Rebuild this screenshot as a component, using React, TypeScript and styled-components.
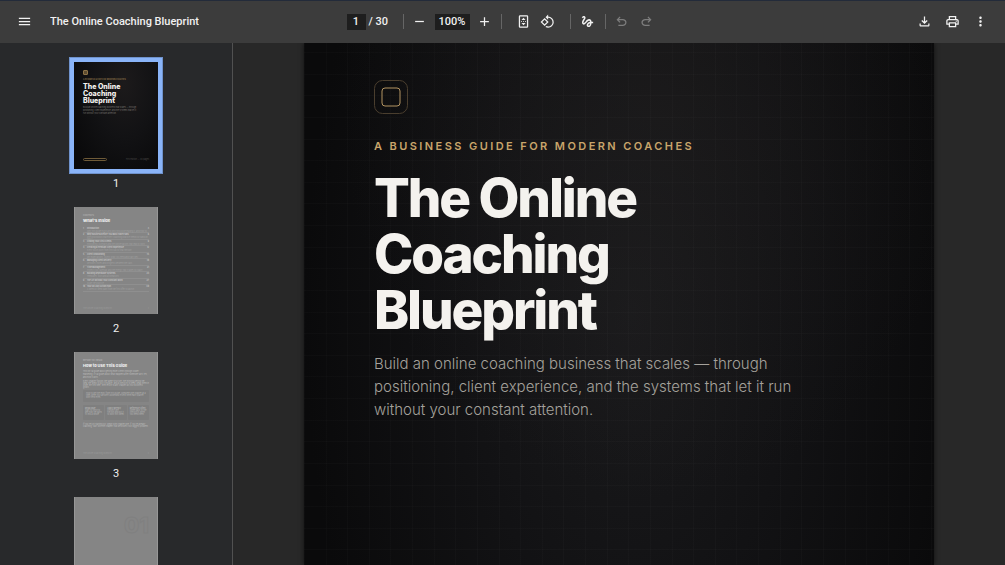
import React from "react";
import styled, { createGlobalStyle } from "styled-components";
import {
  MdAdd,
  MdGesture,
  MdMenu,
  MdMoreVert,
  MdOutlinePrint,
  MdRemove,
  MdRotate90DegreesCcw,
} from "react-icons/md";

const GlobalStyle = createGlobalStyle`
  *, *::before, *::after { box-sizing: border-box; }
  body { margin: 0; background: #282828; }
  button, input { font: inherit; color: inherit; border: 0; padding: 0; margin: 0; }
  h1, h2, p, ol { margin: 0; padding: 0; }
`;

const Shell = styled.div`
  display: grid;
  grid-template-rows: auto minmax(0, 1fr);
  height: 100vh;
  font-family: Roboto, "Liberation Sans", sans-serif;
  color: #f1f1f1;
`;

/* ---------- toolbar ---------- */

const Toolbar = styled.header`
  display: grid;
  grid-template-columns: minmax(0, 1fr) auto minmax(0, 1fr);
  align-items: center;
  height: 43px;
  padding-bottom: 1px;
  border-top: 1px solid #232b3a;
  background: #3c3c3c;
  font-size: 11px;
  font-weight: 500;
`;

const ToolGroup = styled.div<{ $gap?: number }>`
  display: flex;
  align-items: center;
  gap: ${(p) => p.$gap ?? 0}px;
`;

const StartGroup = styled(ToolGroup)`
  padding-left: 12px;
`;

const EndGroup = styled(ToolGroup)`
  justify-content: flex-end;
  padding-right: 13px;
`;

const DocTitle = styled.span`
  white-space: nowrap;
  overflow: hidden;
  text-overflow: ellipsis;
`;

const IconButton = styled.button`
  display: flex;
  align-items: center;
  justify-content: center;
  width: 24px;
  height: 24px;
  flex: none;
  border-radius: 50%;
  background: transparent;
  cursor: pointer;

  svg {
    width: 15px;
    height: 15px;
    fill: currentColor;
  }

  &:disabled {
    color: #7d7d7d;
    cursor: default;
  }
`;

const ToolInput = styled.input<{ $width: number }>`
  width: ${(p) => p.$width}px;
  height: 16px;
  background: #1e1e1e;
  text-align: center;
`;

const PageCount = styled.span`
  width: 23px;
  padding-left: 3px;
  white-space: nowrap;
`;

const Divider = styled.span<{ $before: number; $after: number }>`
  width: 1px;
  height: 15px;
  margin: 0 ${(p) => p.$after}px 0 ${(p) => p.$before}px;
  background: #666666;
`;

/* ---------- thumbnails ---------- */

const Body = styled.div`
  display: grid;
  grid-template-columns: 233px minmax(0, 1fr);
  min-height: 0;
`;

const Sidebar = styled.nav`
  display: flex;
  flex-direction: column;
  align-items: center;
  gap: 16px;
  padding-top: 19px;
  border-right: 1px solid #515151;
  background: #28292b;
  overflow: hidden;
`;

const ThumbItem = styled.div`
  display: flex;
  flex-direction: column;
  align-items: center;
  gap: 8px;
  flex: none;
  font-size: 11px;
  line-height: 14px;
`;

const Thumb = styled.button<{ $selected?: boolean }>`
  display: flex;
  flex-direction: column;
  width: 84px;
  height: 107px;
  padding: ${(p) => (p.$selected ? "8px 9px" : "5px 9px 4px")};
  font-family: Inter, "Liberation Sans", sans-serif;
  text-align: left;
  overflow: hidden;
  cursor: pointer;
  color: ${(p) => (p.$selected ? "#f4f2ee" : "#c4c4c4")};
  background: ${(p) =>
    p.$selected
      ? "radial-gradient(ellipse at 60% 20%, #1c1a1b 0%, #121214 45%, #0a0a0b 85%)"
      : "#858585"};
  box-shadow: ${(p) =>
    p.$selected ? "0 0 0 4px #8ab4f8, 0 0 0 5px #6f92cc" : "inset 1px 0 #979797, inset -1px 0 #979797"};
`;

const MiniLogo = styled.span`
  width: 5px;
  height: 5px;
  border: 1px solid #8d7347;
  border-radius: 1px;
  background: #5d4c30;
`;

const MiniEyebrow = styled.span`
  margin-top: 3px;
  font-size: 2px;
  line-height: 2px;
  font-weight: 600;
  color: #8f754a;
  white-space: nowrap;
`;

const MiniTitle = styled.span<{ $size: number }>`
  margin-top: ${(p) => (p.$size > 5 ? 3 : 1)}px;
  font-size: ${(p) => p.$size}px;
  line-height: ${(p) => (p.$size > 5 ? 7 : 5)}px;
  font-weight: 800;
  color: ${(p) => (p.$size > 5 ? "#f4f2ee" : "#eeeeee")};
  white-space: nowrap;
`;

const MiniText = styled.span<{ $dim?: boolean }>`
  display: block;
  max-width: ${(p) => (p.$dim ? "56px" : "none")};
  margin-top: 2px;
  font-size: 2px;
  line-height: 3px;
  color: ${(p) => (p.$dim ? "#77746f" : "#bcbcbc")};
`;

const MiniFinePrint = styled(MiniText)`
  margin-top: 1px;
  line-height: 2px;
`;

const MiniRows = styled.span`
  display: block;
  margin-top: 4px;
`;

const MiniRow = styled.span`
  display: grid;
  grid-template-columns: 4px 1fr auto;
  height: 7px;
  border-bottom: 1px solid #8f8f8f;
  font-size: 2px;
  line-height: 3px;
  font-weight: 700;

  &:nth-of-type(odd) {
    height: 6px;
  }
`;

const MiniSub = styled.span`
  display: block;
  font-weight: 400;
  color: #a0a0a0;
  line-height: 2px;
`;

const MiniPanel = styled.span`
  display: flex;
  flex-direction: column;
  height: 12px;
  margin-top: 2px;
  padding: 2px 3px;
  border-radius: 1px;
  background: #7f7f7f;
  font-size: 2px;
  line-height: 2px;
  color: #b4b4b4;
`;

const MiniCards = styled.span`
  display: grid;
  grid-template-columns: repeat(3, 1fr);
  gap: 1px;
  margin: 3px 0 2px;
`;

const MiniCard = styled(MiniPanel)`
  height: 15px;
  margin: 0;
  padding: 2px;
`;

const MiniFooter = styled.span`
  display: flex;
  align-items: center;
  justify-content: space-between;
  margin-top: auto;
  font-size: 2px;
  line-height: 3px;
  color: #999999;
`;

const MiniPill = styled.span`
  width: 24px;
  height: 3px;
  border: 1px solid #6f5b38;
  border-radius: 2px;
`;

const MiniNote = styled.span`
  color: #4a4948;
`;

const MiniNumber = styled.span`
  margin-top: 10px;
  font-size: 22px;
  line-height: 26px;
  font-weight: 800;
  text-align: right;
  color: transparent;
  -webkit-text-stroke: 1px #808080;
`;

/* ---------- document ---------- */

const Viewer = styled.main`
  display: flex;
  justify-content: center;
  background: #282828;
  overflow: hidden;
`;

const gridLine = "rgba(255, 255, 255, 0.014)";

const Page = styled.article`
  width: 630px;
  max-width: 100%;
  padding: 37px 70px;
  font-family: Inter, "Liberation Sans", sans-serif;
  background:
    repeating-linear-gradient(90deg, ${gridLine} 0 1px, transparent 1px 3.432%),
    repeating-linear-gradient(180deg, transparent 0 9px, ${gridLine} 9px 10px, transparent 10px 4.143%),
    radial-gradient(ellipse 50% 75% at 56% 12%, rgba(34, 32, 32, 0.45), transparent),
    radial-gradient(ellipse 52% 120% at 52% 52%, #1a1a1c 0%, #121214 50%, #0a0a0b 100%);
  box-shadow: 0 0 5px rgba(0, 0, 0, 0.6);
`;

const Logo = styled.svg`
  display: block;
  width: 34px;
  height: 34px;
`;

const Eyebrow = styled.p`
  margin-top: 24px;
  font-size: 11px;
  line-height: 16px;
  font-weight: 600;
  letter-spacing: 0.22em;
  text-transform: uppercase;
  color: #c9a56b;
`;

const Headline = styled.h1`
  max-width: 380px;
  margin-top: 16px;
  font-size: 53px;
  line-height: 56px;
  font-weight: 800;
  letter-spacing: -0.04em;
  color: #f4f2ee;
`;

const Lead = styled.p`
  max-width: 420px;
  margin-top: 14px;
  font-size: 15px;
  line-height: 23px;
  font-weight: 300;
  color: #a5a29c;
`;

const ms = "0 -960 960 960";

const FitIcon = () => (
  <svg viewBox="0 0 24 24" aria-hidden="true">
    <path
      fillRule="evenodd"
      d="M6.500 2h11a2 2 0 0 1 2 2v16a2 2 0 0 1-2 2h-11a2 2 0 0 1-2-2V4a2 2 0 0 1 2-2Zm0 2v16h11V4h-11Z"
    />
    <path d="m12 6 3.300 3.500H8.700zM12 18l3.300-3.500H8.700zM8 11.400h1.600v1.200H8zM11.200 11.400h1.600v1.200h-1.600zM14.400 11.400H16v1.200h-1.600z" />
  </svg>
);

const UndoIcon = () => (
  <svg viewBox={ms} aria-hidden="true">
    <path d="M280-200v-80h284q63 0 109.500-40T720-420q0-60-46.500-100T564-560H312l104 104-56 56-200-200 200-200 56 56-104 104h252q97 0 169.500 63T800-420q0 94-72.500 157T564-200H280Z" />
  </svg>
);

const RedoIcon = () => (
  <svg viewBox={ms} aria-hidden="true">
    <path d="M396-200q-97 0-169.500-63T154-420q0-94 72.500-157T396-640h252L544-744l56-56 200 200-200 200-56-56 104-104H396q-63 0-109.500 40T240-420q0 60 46.500 100T396-280h284v80H396Z" />
  </svg>
);

const DownloadIcon = () => (
  <svg viewBox={ms} aria-hidden="true">
    <path d="M480-320 280-520l56-58 104 104v-326h80v326l104-104 56 58-200 200ZM240-160q-33 0-56.500-23.500T160-240v-120h80v120h480v-120h80v120q0 33-23.500 56.500T720-160H240Z" />
  </svg>
);

const chapters = [
  ["Introduction", "Why this guide exists and who should be reading it, and how to begin"],
  ["Why Business Before You Must Have Plans", "The groundwork that every coaching practice needs to stand on first"],
  ["Finding Your First Clients", "Positioning, outreach and the conversations that lead to work"],
  ["Creating a Premium Client Experience", "Every touch point from first call to final session"],
  ["Client Onboarding", "Set expectations, collect what you need and start well"],
  ["Managing Client Delivery", "Sessions, notes and progress between the calls"],
  ["Time Management", "Protect your calendar and the energy that it takes to coach"],
  ["Building Repeatable Systems", "Templates, tools and automations"],
  ["The Art Without Your Constant Work", "Scale the practice"],
  ["Your 90-Day Action Plan", "A week by week path from the first offer to launch"],
];

const cards = [
  ["Read Once", "Start to finish to see how the parts fit into a whole"],
  ["Apply Weekly", "Choose one section and put it to work this week"],
  ["Reference Often", "Come back to the checklists when you need them"],
];

export default function App() {
  return (
    <>
      <GlobalStyle />
      <Shell>
        <Toolbar>
          <StartGroup $gap={14}>
            <IconButton aria-label="Menu"><MdMenu /></IconButton>
            <DocTitle>The Online Coaching Blueprint</DocTitle>
          </StartGroup>
          <ToolGroup>
            <ToolInput $width={19} aria-label="Page number" defaultValue="1" />
            <PageCount>/ 30</PageCount>
            <Divider $before={14} $after={4} />
            <ToolGroup $gap={3}>
              <IconButton aria-label="Zoom out"><MdRemove /></IconButton>
              <ToolInput $width={35} aria-label="Zoom level" defaultValue="100%" />
              <IconButton aria-label="Zoom in"><MdAdd /></IconButton>
            </ToolGroup>
            <Divider $before={4} $after={10} />
            <IconButton aria-label="Fit to page"><FitIcon /></IconButton>
            <IconButton aria-label="Rotate counterclockwise"><MdRotate90DegreesCcw /></IconButton>
            <Divider $before={10} $after={5} />
            <IconButton aria-label="Draw"><MdGesture /></IconButton>
            <Divider $before={5} $after={4} />
            <ToolGroup $gap={1}>
              <IconButton aria-label="Undo" disabled><UndoIcon /></IconButton>
              <IconButton aria-label="Redo" disabled><RedoIcon /></IconButton>
            </ToolGroup>
          </ToolGroup>
          <EndGroup $gap={4}>
            <IconButton aria-label="Download"><DownloadIcon /></IconButton>
            <IconButton aria-label="Print"><MdOutlinePrint /></IconButton>
            <IconButton aria-label="More actions"><MdMoreVert /></IconButton>
          </EndGroup>
        </Toolbar>

        <Body>
          <Sidebar aria-label="Thumbnails">
            <ThumbItem>
              <Thumb $selected aria-label="Page 1">
                <MiniLogo />
                <MiniEyebrow>A BUSINESS GUIDE FOR MODERN COACHES</MiniEyebrow>
                <MiniTitle $size={7}>The Online<br />Coaching<br />Blueprint</MiniTitle>
                <MiniText $dim>
                  Build an online coaching business that scales — through positioning, client
                  experience, and the systems that let it run without your constant attention.
                </MiniText>
                <MiniFooter><MiniPill /><MiniNote>First edition — 30 pages</MiniNote></MiniFooter>
              </Thumb>
              <span>1</span>
            </ThumbItem>

            <ThumbItem>
              <Thumb aria-label="Page 2">
                <MiniText>CONTENTS</MiniText>
                <MiniTitle $size={4}>What's Inside</MiniTitle>
                <MiniRows>
                  {chapters.map(([title, note], i) => (
                    <MiniRow key={title}>
                      <span>{i + 1}</span>
                      <span>{title}<MiniSub>{note}</MiniSub></span>
                      <span>{i * 3 + 3}</span>
                    </MiniRow>
                  ))}
                </MiniRows>
                <MiniFooter><span>The Online Coaching Blueprint</span><span>2</span></MiniFooter>
              </Thumb>
              <span>2</span>
            </ThumbItem>

            <ThumbItem>
              <Thumb aria-label="Page 3">
                <MiniText>BEFORE YOU BEGIN</MiniText>
                <MiniTitle $size={4}>How to Use This Guide</MiniTitle>
                <MiniText>
                  This isn't a guide about getting more clients through louder marketing. It's a
                  guide about what happens after someone says yes, and how it lasts.
                </MiniText>
                <MiniFinePrint>
                  Every chapter follows the same structure: the thinking behind the idea, the steps
                  to put it in place, and a checklist to keep. Read them in order the first time,
                  then return to any chapter as your business grows.
                </MiniFinePrint>
                <MiniPanel>
                  How to get the most from this guide: complete one chapter at a time, write your
                  answers down and review them each quarter with fresh eyes.
                </MiniPanel>
                <MiniCards>
                  {cards.map(([title, note]) => (
                    <MiniCard key={title}><b>{title}</b>{note}</MiniCard>
                  ))}
                </MiniCards>
                <MiniFinePrint>
                  If you're just starting out, begin with chapter one. If you're already coaching,
                  start with the chapter that describes your biggest problem.
                </MiniFinePrint>
                <MiniFooter><span>The Online Coaching Blueprint</span><span>3</span></MiniFooter>
              </Thumb>
              <span>3</span>
            </ThumbItem>

            <ThumbItem>
              <Thumb aria-label="Page 4">
                <MiniNumber>01</MiniNumber>
              </Thumb>
            </ThumbItem>
          </Sidebar>

          <Viewer>
            <Page>
              <Logo viewBox="0 0 34 34" fill="none" aria-hidden="true">
                <rect x="0.500" y="0.500" width="33" height="33" rx="8" stroke="#4a3e2e" />
                <rect x="8" y="8" width="18" height="18" rx="3" stroke="#b39462" />
              </Logo>
              <Eyebrow>A Business Guide for Modern Coaches</Eyebrow>
              <Headline>The Online Coaching Blueprint</Headline>
              <Lead>
                Build an online coaching business that scales — through positioning, client
                experience, and the systems that let it run without your constant attention.
              </Lead>
            </Page>
          </Viewer>
        </Body>
      </Shell>
    </>
  );
}
